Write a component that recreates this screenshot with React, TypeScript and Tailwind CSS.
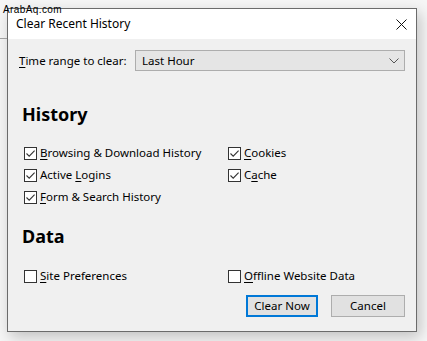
import React from "react";

interface Opt {
  pre: string;
  key: string;
  post: string;
  checked: boolean;
}

const Label = ({ pre, k, post }: { pre: string; k: string; post: string }) => (
  <span>
    {pre}
    <span className="underline underline-offset-2">{k}</span>
    {post}
  </span>
);

const Check = ({ opt }: { opt: Opt }) => (
  <div className="flex h-[22px] items-center gap-[3px]">
    <span className="flex h-[13px] w-[13px] shrink-0 items-center justify-center border border-[#333333] bg-white">
      {opt.checked && (
        <svg width="11" height="11" viewBox="0 0 11 11" fill="none">
          <path d="M1.5 5.5 L4.2 8.2 L9.6 2.6" stroke="#333333" strokeWidth="1.1" />
        </svg>
      )}
    </span>
    <Label pre={opt.pre} k={opt.key} post={opt.post} />
  </div>
);

const historyLeft: Opt[] = [
  { pre: "", key: "B", post: "rowsing & Download History", checked: true },
  { pre: "Active ", key: "L", post: "ogins", checked: true },
  { pre: "", key: "F", post: "orm & Search History", checked: true },
];

const historyRight: Opt[] = [
  { pre: "", key: "C", post: "ookies", checked: true },
  { pre: "C", key: "a", post: "che", checked: true },
];

export default function App() {
  return (
    <div className="relative h-[341px] w-[427px] overflow-hidden bg-[#f6f6f6] pl-[7px] pt-[8px] font-['Noto_Sans',sans-serif] text-[11.5px] text-black">
      <div className="absolute left-0 top-[38px] h-px w-[7px] bg-[#a0a0a0]" />
      <div className="flex h-[324px] w-[410px] flex-col border border-[#6b6b6b] bg-[#f0f0f0] shadow-[3px_5px_14px_rgba(0,0,0,0.22)]">
        <div className="flex h-[30px] items-center justify-between bg-white pl-[8px] pr-[9px]">
          <span className="text-[12px] leading-[14px]">Clear Recent History</span>
          <svg width="11" height="11" viewBox="0 0 11 11">
            <path d="M0.5 0.5 L10.5 10.5 M10.5 0.5 L0.5 10.5" stroke="#111" strokeWidth="1" />
          </svg>
        </div>

        <div className="flex flex-col px-[11px]">
          <div className="mt-[11px] flex items-center justify-between">
            <span>
              <span className="underline underline-offset-2">T</span>ime range to clear:
            </span>
            <div className="flex h-[21px] w-[270px] items-center justify-between border border-[#adadad] bg-[#e5e5e5] pl-[6px] pr-[5px]">
              <span>Last Hour</span>
              <svg width="10" height="6" viewBox="0 0 10 6" fill="none">
                <path d="M0.5 0.5 L5 5 L9.5 0.5" stroke="#555" strokeWidth="1" />
              </svg>
            </div>
          </div>

          <h2 className="mt-[31px] h-[24px] pl-[3px] text-[18px] font-bold leading-[24px]">History</h2>

          <div className="mt-[16px] grid grid-cols-[204px_1fr] pl-[5px]">
            <div className="flex flex-col">
              {historyLeft.map((o) => (
                <Check key={o.post} opt={o} />
              ))}
            </div>
            <div className="flex flex-col">
              {historyRight.map((o) => (
                <Check key={o.post} opt={o} />
              ))}
            </div>
          </div>

          <h2 className="mt-[16px] h-[24px] pl-[3px] text-[18px] font-bold leading-[24px]">Data</h2>

          <div className="mt-[17px] grid grid-cols-[204px_1fr] pl-[5px]">
            <Check opt={{ pre: "", key: "S", post: "ite Preferences", checked: false }} />
            <Check opt={{ pre: "", key: "O", post: "ffline Website Data", checked: false }} />
          </div>

          <div className="mt-[8px] flex justify-end gap-[13px]">
            <button className="h-[22px] w-[72px] border-2 border-[#0078d7] bg-[#e1e1e1]">Clear Now</button>
            <button className="h-[22px] w-[74px] border border-[#adadad] bg-[#e1e1e1]">Cancel</button>
          </div>
        </div>
      </div>
      <span className="absolute left-[3px] top-[5px] font-['Liberation_Sans',sans-serif] text-[10px] leading-[10px] tracking-[0.4px] text-black">
        ArabAq.com
      </span>
    </div>
  );
}
